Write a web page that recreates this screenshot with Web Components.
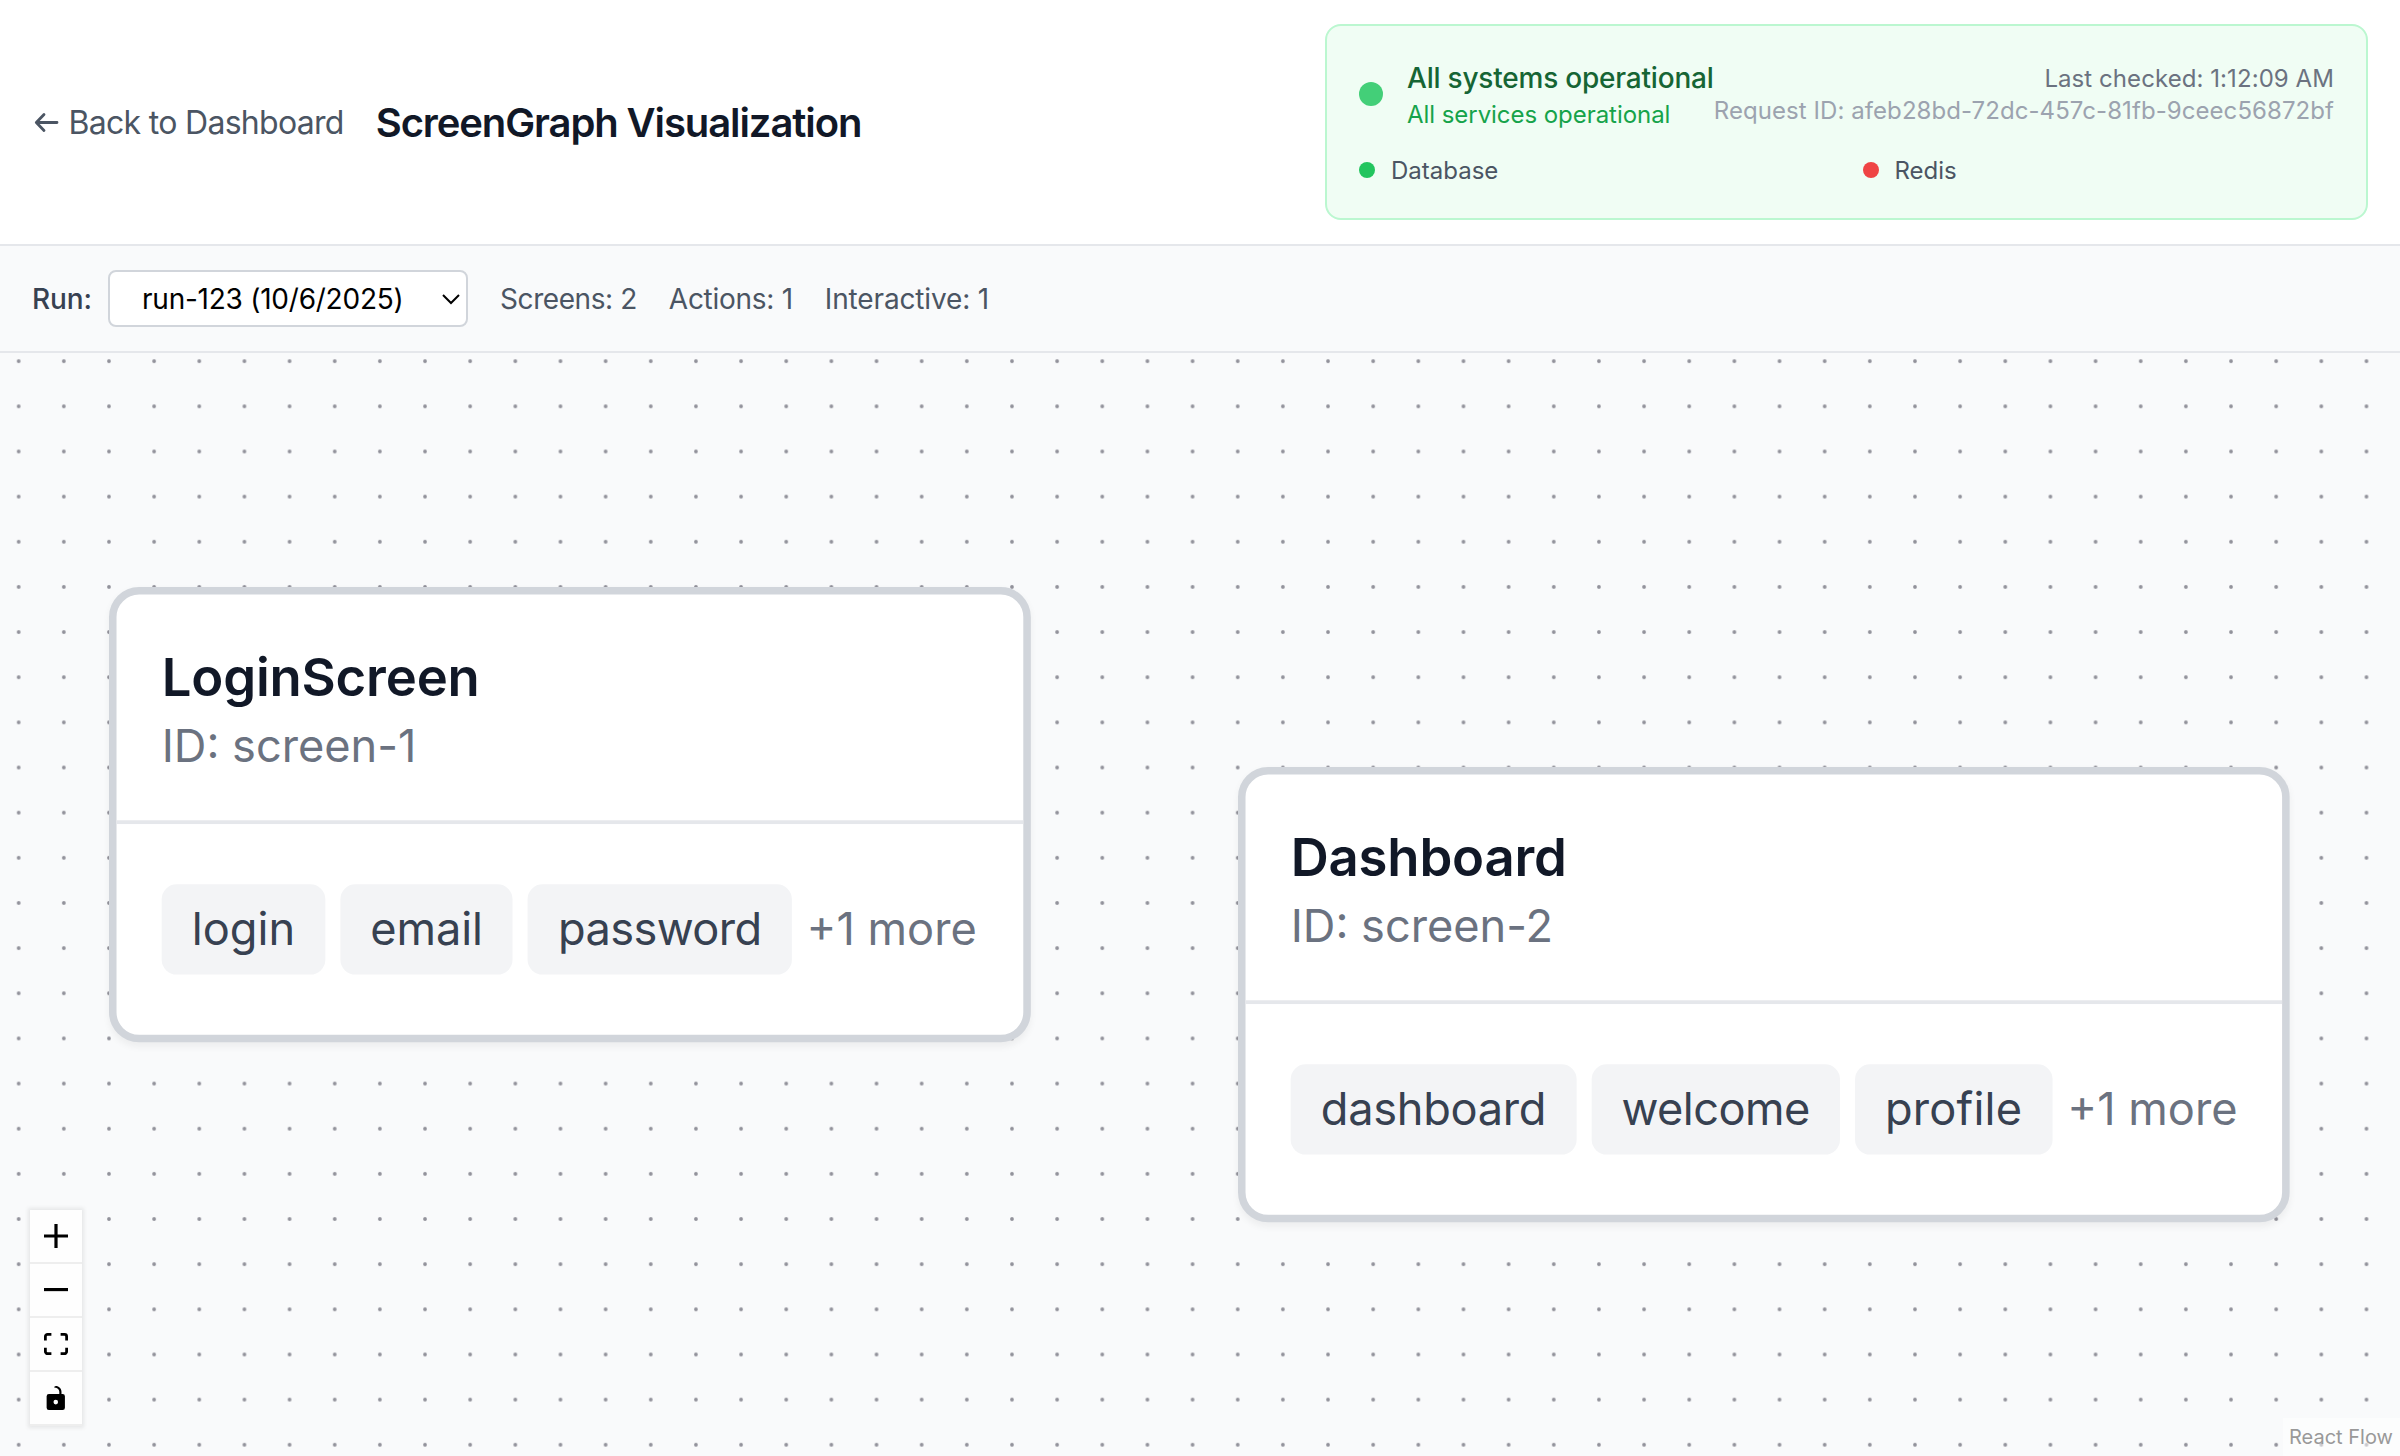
<!DOCTYPE html>
<html lang="en"><head><meta charset="utf-8"><title>ScreenGraph Visualization</title>
<style>
html,body{margin:0;height:100%;overflow:hidden}
body{font-family:Inter,"Liberation Sans",sans-serif;background:#fff}
</style></head><body>
<graph-page></graph-page>
<script>
const define = (name, html) => {
  const tpl = document.createElement('template');
  tpl.innerHTML = html;
  customElements.define(name, class extends HTMLElement {
    constructor(){ super(); this.attachShadow({mode:'open'}).append(tpl.content.cloneNode(true)); }
  });
};

define('status-dot', `<style>:host{display:block;flex:none;width:var(--size,16px);height:var(--size,16px);border-radius:50%;background:var(--dot,#22c55e)}</style>`);

define('health-panel', `<style>
:host{display:block;box-sizing:border-box;width:1043px;border:2px solid #bbf7d0;border-radius:16px;background:#f0fdf4;padding:32px}
.top{display:flex;align-items:center;justify-content:space-between}
.left{display:flex;align-items:center;gap:24px}
.t{font-size:28px;line-height:40px;font-weight:500;color:#166534;white-space:nowrap;letter-spacing:-.21px}
.s{font-size:24px;line-height:32px;color:#16a34a;white-space:nowrap;letter-spacing:-.05px}
.right{text-align:right;font-size:24px;line-height:32px;color:#6b7280;white-space:nowrap;letter-spacing:.07px;margin-left:-1px}
.right,.s,.item span{transform:translateY(1px)}
.id{color:#9ca3af}
.grid{display:grid;grid-template-columns:1fr 1fr;gap:32px;margin-top:24px}
.item{display:flex;align-items:center;gap:16px;font-size:24px;line-height:32px;color:#4b5563}
</style>
<div class="top"><div class="left"><status-dot style="--size:24px;--dot:#43cf78"></status-dot>
<div><div class="t">All systems operational</div><div class="s">All services operational</div></div></div>
<div class="right"><div>Last checked: 1:12:09 AM</div><div class="id">Request ID: afeb28bd-72dc-457c-81fb-9ceec56872bf</div></div></div>
<div class="grid"><div class="item"><status-dot></status-dot><span>Database</span></div><div class="item"><status-dot style="--dot:#ef4444"></status-dot><span>Redis</span></div></div>`);

define('page-header', `<style>
:host{display:flex;align-items:center;justify-content:space-between;box-sizing:border-box;height:246px;padding:24px 32px;border-bottom:2px solid #e5e7eb;background:#fff}
.l{display:flex;align-items:center;gap:32px}
.back{display:flex;align-items:center;gap:9.500px;font-size:32px;line-height:48px;color:#4b5563;letter-spacing:-.7px;padding-left:1px}
.back span{padding-top:1px}
h1{margin:0;font-size:40px;line-height:56px;font-weight:600;color:#111827;letter-spacing:-1.100px;padding-top:1px}
</style><div class="l"><div class="back"><svg width="26" height="24" viewBox="0 0 26 24" fill="none" stroke="#4b5563" stroke-width="2.8" stroke-linecap="round" stroke-linejoin="round"><path d="M24 12.500H3.500M11 4.500L3.300 12.500l7.700 8"/></svg><span>Back to Dashboard</span></div><h1>ScreenGraph Visualization</h1></div><health-panel></health-panel>`);

define('run-bar', `<style>
:host{display:flex;align-items:center;gap:32px;box-sizing:border-box;height:107px;padding:0 32px;border-bottom:2px solid #e5e7eb;background:#f9fafb;font-size:28px;line-height:40px;color:#4b5563}
.run{display:flex;align-items:center;gap:16px}
.lab{font-weight:500;color:#374151;letter-spacing:-.08px}
.sel{display:flex;align-items:center;justify-content:space-between;box-sizing:border-box;width:360px;height:57px;border:2px solid #d1d5db;border-radius:8px;background:#fff;color:#000;padding:0 5px 0 32px;letter-spacing:-.24px}
.s1{letter-spacing:-.42px}.s2{letter-spacing:-.27px}.s3{letter-spacing:-.15px}
</style><div class="run"><span class="lab">Run:</span><div class="sel"><span>run-123 (10/6/2025)</span><svg width="20" height="14" viewBox="0 0 20 14" fill="none" stroke="#000" stroke-width="2"><path d="M2 3l8 8 8-8"/></svg></div></div>
<span class="s1">Screens: 2</span><span class="s2">Actions: 1</span><span class="s3">Interactive: 1</span>`);

define('screen-node', `<style>
:host{display:block;position:absolute;box-sizing:border-box;height:484px;border:8px solid #d1d5db;border-radius:32px;background:#fff;box-shadow:0 4px 8px rgba(0,0,0,.05);transform:scale(.940625);transform-origin:0 0}
.h{padding:48px;border-bottom:4px solid #e5e7eb}
.t{font-size:56px;line-height:80px;font-weight:600;color:#111827;letter-spacing:-.2px}
.i{font-size:48px;line-height:64px;color:#6b7280;transform:translateY(1px)}
.b{display:flex;align-items:center;gap:16px;padding:64px 48px}
</style><div class="h"><div class="t"><slot name="title"></slot></div><div class="i"><slot name="id"></slot></div></div><div class="b"><slot></slot></div>`);
define('tag-chip', `<style>:host{display:block;padding:16px 32px;border-radius:16px;background:#f3f4f6;color:#374151;font-size:48px;line-height:64px;white-space:nowrap}</style><slot></slot>`);
define('more-label', `<style>:host{display:block;color:#6b7280;font-size:48px;line-height:64px;white-space:nowrap}</style><slot></slot>`);
define('flow-controls', `<style>
:host{position:absolute;left:30px;bottom:30px;display:flex;flex-direction:column;box-shadow:0 0 4px 2px rgba(0,0,0,.08)}
div{box-sizing:border-box;width:52px;height:54px;border-bottom:2px solid #eee;background:#fefefe;display:flex;align-items:center;justify-content:center}
svg{width:24px;max-height:24px}
</style>
<div><svg viewBox="0 0 32 32"><path d="M32 18.133H18.133V32h-4.266V18.133H0v-4.266h13.867V0h4.266v13.867H32z"/></svg></div>
<div><svg viewBox="0 0 32 5"><path d="M0 0h32v4.200H0z"/></svg></div>
<div><svg viewBox="0 0 32 30"><path d="M3.692 4.63c0-.53.4-.938.939-.938h5.215V0H4.708C2.13 0 0 2.054 0 4.63v5.216h3.692V4.631zM27.354 0h-5.200v3.692h5.170c.53 0 .984.4.984.939v5.215H32V4.631A4.624 4.624 0 0027.354 0zm.954 24.830c0 .532-.4.94-.939.94h-5.215v3.768h5.215c2.577 0 4.631-2.130 4.631-4.707v-5.139h-3.692v5.139zm-23.677.94c-.531 0-.939-.4-.939-.94v-5.138H0v5.139c0 2.577 2.130 4.707 4.708 4.707h5.138V25.770H4.631z"/></svg></div>
<div><svg viewBox="0 0 25 32"><path d="M21.333 10.667H19.810V7.619C19.810 3.429 16.380 0 12.190 0c-4.114 1.828-1.370 2.133.305 2.438 1.676.305 4.420 2.590 4.420 5.181v3.048H3.047A3.056 3.056 0 000 13.714v15.238A3.056 3.056 0 003.048 32h18.285a3.056 3.056 0 003.048-3.048V13.714a3.056 3.056 0 00-3.048-3.047zM12.190 24.533a3.056 3.056 0 01-3.047-3.047 3.056 3.056 0 013.047-3.048 3.056 3.056 0 013.048 3.048 3.056 3.056 0 01-3.048 3.047z"/></svg></div>`);
define('flow-canvas', `<style>
:host{display:block;position:relative;flex:1;min-height:0;overflow:hidden;background:#f9fafb}
.bg{display:block;width:100%;height:100%}
.attr{position:absolute;right:0;bottom:0;box-sizing:border-box;width:117px;height:38px;padding:4px 6px;background:rgba(255,255,255,.5);font-size:20px;line-height:30px;color:#999;white-space:nowrap}
</style>
<svg class="bg"><pattern id="dots" x="-3.880" y="-14.400" width="45.150" height="45.150" patternUnits="userSpaceOnUse"><circle cx="22.575" cy="22.575" r="1.880" fill="#91919a"/></pattern><rect width="100%" height="100%" fill="url(#dots)"/></svg>
<slot></slot><flow-controls></flow-controls><div class="attr">React Flow</div>`);
define('graph-page', `<style>:host{display:flex;flex-direction:column;height:1456px}page-header,run-bar{flex:none}</style>
<page-header></page-header><run-bar></run-bar>
<flow-canvas>
<screen-node style="left:109px;top:234px;width:980px"><span slot="title">LoginScreen</span><span slot="id">ID: screen-1</span><tag-chip>login</tag-chip><tag-chip style="letter-spacing:-.12px">email</tag-chip><tag-chip style="letter-spacing:-.65px">password</tag-chip><more-label>+1 more</more-label></screen-node>
<screen-node style="left:1238px;top:414px;width:1118px"><span slot="title">Dashboard</span><span slot="id">ID: screen-2</span><tag-chip style="letter-spacing:-.3px">dashboard</tag-chip><tag-chip style="letter-spacing:-.58px">welcome</tag-chip><tag-chip style="letter-spacing:.2px">profile</tag-chip><more-label>+1 more</more-label></screen-node>
</flow-canvas>`);
</script></body></html>
